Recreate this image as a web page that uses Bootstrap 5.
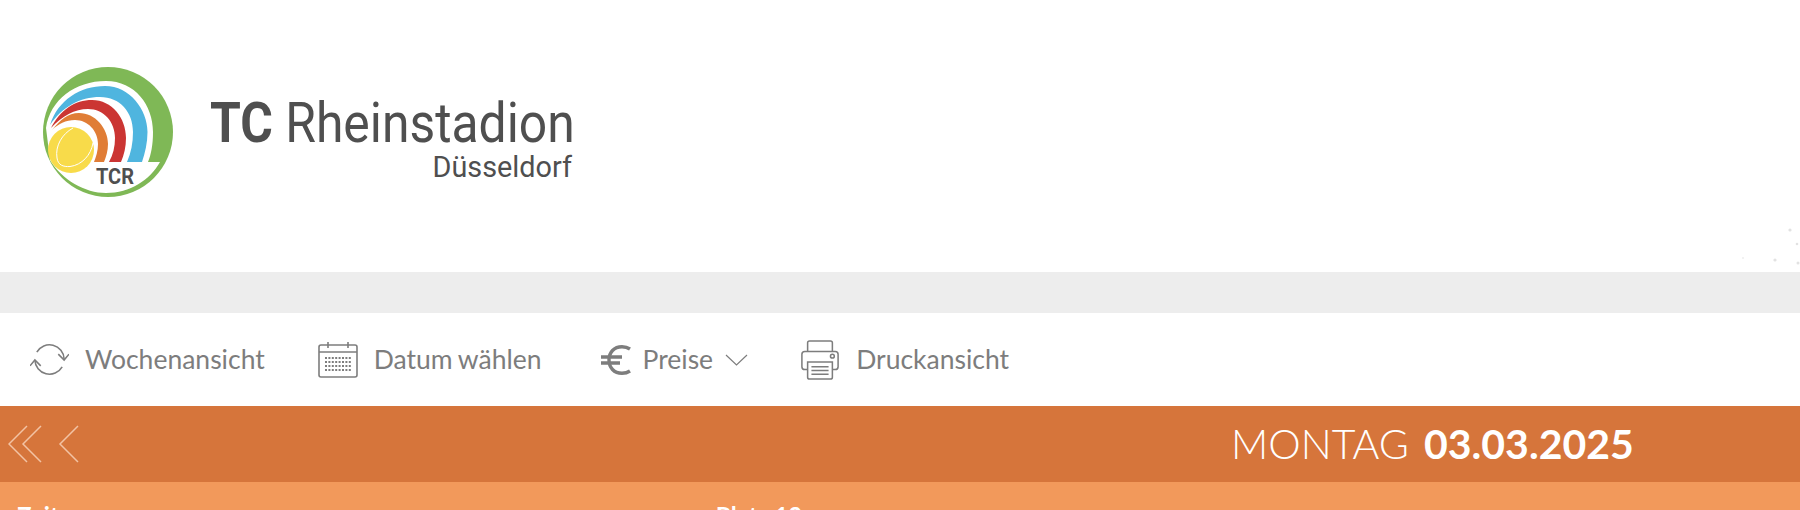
<!DOCTYPE html>
<html lang="de">
<head>
  <meta charset="UTF-8">
  <title>TC Rheinstadion</title>
  <link href="https://cdn.jsdelivr.net/npm/bootstrap@5.3.0/dist/css/bootstrap.min.css" rel="stylesheet">
  <style>
    body { font-family: Lato, "Liberation Sans", sans-serif; color: #7d7d7d; background: #fff; overflow: hidden; }
    .site-head { height: 272px; padding-top: 64px; padding-left: 40px; }
    .brand-text { font-family: Roboto, "Liberation Sans", sans-serif; color: #4f4f4f; width: 362px; margin-left: 34px; margin-top: 30px; }
    .brand-main { font-size: 56px; line-height: 58px; white-space: nowrap; transform: scaleX(0.89); transform-origin: left top; }
    .brand-sub { font-size: 30px; line-height: 36px; margin-top: -3px; transform: scaleX(0.96); transform-origin: right top; }
    .specks { margin-top: 161px; }
    .grey-band { height: 41px; background: #ededed; }
    .tool-bar { height: 93px; padding-left: 30px; gap: 54px; }
    .tool-item { color: #7d7d7d; font-size: 26.5px; text-decoration: none; gap: 16px; white-space: nowrap; }
    .tool-item.narrow-gap { gap: 12px; margin-left: 5px; }
    .tool-item.print-item { margin-left: -2px; }
    .tight-words { word-spacing: -1px; margin-left: -1px; }
    .day-bar { height: 76px; background: #d6753b; color: #fff; padding-left: 8px; }
    .day-title { font-size: 41px; font-weight: 300; margin-left: 1151px; white-space: nowrap; }
    .day-title b { font-weight: 700; margin-left: 4px; }
    .head-row { height: 28px; background: #f2995b; color: #fff; font-weight: 700; font-size: 24px; padding-left: 17px; padding-top: 19px; overflow: hidden; line-height: 30px; }
    .plan-col { margin-left: 657px; }
  </style>
</head>
<body>
  <div class="site-head d-flex align-items-start">
    <svg width="136" height="136" viewBox="40 64 136 136">
      <circle cx="108" cy="132" r="65" fill="#7fb856"/>
      <path d="M46 128 C50 100 75 81 106 81 C135 81 153 105 153 132 C153 145 151 155 148 162 L160 162 C150 180 130 193 106 193 C85 193 62 180 50 160Z" fill="#fff"/>
      <path d="M50 125 C58 100 80 86 105 86 C130 86 147.500 110 147.500 132 C147.500 143 145 153 142 162 L127 162 C131 153 133 143 133 132 C133 112 120 97 100 97 C80 97 62 107 50 125Z" fill="#4fb5df"/>
      <path d="M51 128 C60 110 75 100 92 100 C112 100 126 118 126 138 C126 147 124 155 121 162 L109 162 C113 155 115 147 115 138 C115 122 104 109 88 109 C75 109 62 116 51 128Z" fill="#cb3533"/>
      <path d="M52 130 C60 120 68 113 79 113 C95 113 108 128 108 144 C108 151 106 157 104 162 L94 162 C96 157 98 151 98 144 C98 131 88 120 75 120 C66 120 58 124 52 130Z" fill="#e07d36"/>
      <circle cx="71" cy="150" r="23" fill="#f8db4a"/>
      <path d="M73 128 C62 134 55 146 57 158 C58 165 63 167 70 166.500 C82 165 91 155 93 143" fill="none" stroke="#fff" stroke-width="1"/>
      <text x="96" y="184" font-family="Roboto, sans-serif" font-weight="700" font-size="22" textLength="38" lengthAdjust="spacingAndGlyphs" fill="#4f4f4f">TCR</text>
    </svg>
    <div class="brand-text text-end">
      <div class="brand-main text-start"><b>TC</b> Rheinstadion</div>
      <div class="brand-sub">Düsseldorf</div>
    </div>
    <svg class="specks ms-auto" width="60" height="40" viewBox="0 0 60 40" fill="#e2e2e2">
      <circle cx="50" cy="5" r="1.6"/><circle cx="57" cy="19" r="1.3"/><circle cx="35" cy="35" r="1.6"/><circle cx="58" cy="38" r="1.5"/><circle cx="3" cy="33" r="0.8"/>
    </svg>
  </div>
  <div class="grey-band"></div>
  <nav class="tool-bar d-flex align-items-center">
    <a href="#" class="tool-item d-flex align-items-center">
      <svg width="39" height="34" viewBox="0 0 40 34" fill="none" stroke="#7d7d7d" stroke-width="1.6">
        <path d="M7 9 A15 15 0 0 1 35 16"/><path d="M29 11 L35 17 L40 11"/>
        <path d="M33 24 A15 15 0 0 1 5 17"/><path d="M0 23 L5 17 L11 23"/>
      </svg>
      Wochenansicht
    </a>
    <a href="#" class="tool-item tight-words d-flex align-items-center">
      <svg width="40" height="36" viewBox="0 0 40 36" fill="none" stroke="#7d7d7d" stroke-width="1.6">
        <rect x="1" y="3" width="38" height="32" rx="2"/><path d="M1 10 H39 M10 0 V6 M30 0 V6"/>
        <path d="M7 16 H33 M7 20 H33 M7 24 H33 M7 28 H33" stroke-width="2" stroke-dasharray="2 1.4"/>
      </svg>
      Datum wählen
    </a>
    <a href="#" class="tool-item narrow-gap d-flex align-items-center">
      <svg width="30" height="30" viewBox="0 0 30 30" fill="none" stroke="#7d7d7d" stroke-width="3.4">
        <path d="M29 4 C26 2 24 1.700 21 1.700 C13 1.700 8 7.500 8 15 C8 22.500 13 28.300 21 28.300 C24 28.300 26 28 29 26"/>
        <path d="M0 12 H21 M0 18 H19"/>
      </svg>
      <span class="d-flex align-items-center gap-2">Preise
        <svg class="ms-1" width="23" height="12" viewBox="0 0 23 12" fill="none" stroke="#7d7d7d" stroke-width="1.2"><path d="M1 1 L11.500 11 L22 1"/></svg>
      </span>
    </a>
    <a href="#" class="tool-item print-item d-flex align-items-center">
      <svg width="40" height="40" viewBox="0 0 40 42" fill="none" stroke="#7d7d7d" stroke-width="1.6">
        <path d="M7 12 V3 Q7 1 9 1 H31 Q33 1 33 3 V12"/>
        <path d="M7 31 H4 Q1 31 1 28 V15 Q1 12 4 12 H36 Q39 12 39 15 V28 Q39 31 36 31 H33"/>
        <path d="M7 23 H33 V39 Q33 41 31 41 H9 Q7 41 7 39Z"/>
        <path d="M11 28 H29 M11 32 H29 M11 36 H29"/><circle cx="33" cy="17" r="2"/>
      </svg>
      Druckansicht
    </a>
  </nav>
  <div class="day-bar d-flex align-items-center">
    <svg width="72" height="38" viewBox="0 0 72 38" fill="none" stroke="#f2c3a4" stroke-width="1.5">
      <path d="M19 1 L1 19 L19 37 M33 1 L15 19 L33 37 M70 1 L52 19 L70 37"/>
    </svg>
    <div class="day-title">MONTAG <b>03.03.2025</b></div>
  </div>
  <div class="head-row d-flex">
    <div>Zeit</div>
    <div class="plan-col">Platz 12</div>
  </div>
</body>
</html>
